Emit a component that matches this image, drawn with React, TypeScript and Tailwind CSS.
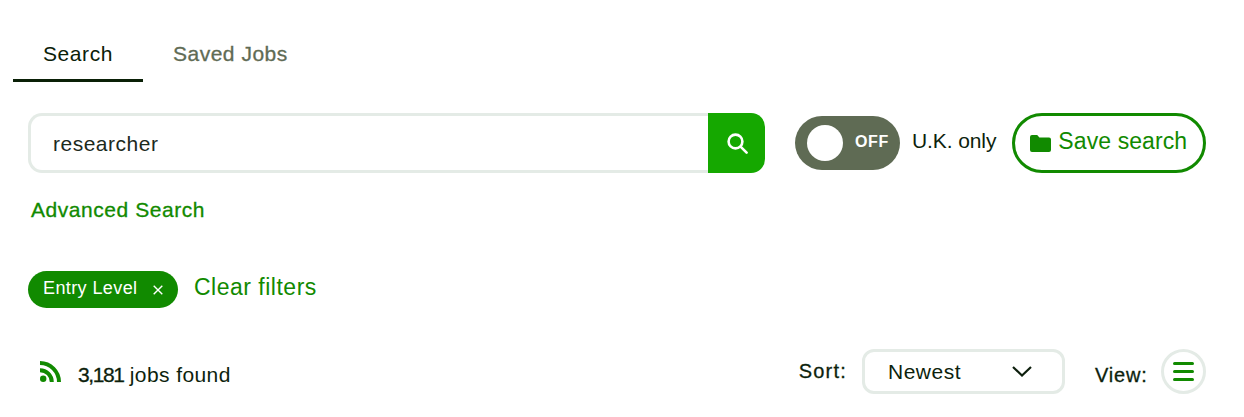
import React from 'react'

const font = "font-['Liberation_Sans',Arial,sans-serif]"

function SearchIcon() {
  return (
    <svg width="22" height="22" viewBox="0 0 22 22" fill="none" stroke="#fff" strokeWidth="2.6" strokeLinecap="round">
      <circle cx="9.5" cy="9.5" r="6.9" />
      <path d="M14.8 14.8 20.6 20.6" />
    </svg>
  )
}

function FolderIcon() {
  return (
    <svg width="21" height="17" viewBox="0 0 21 17" fill="#118a00">
      <path d="M0 2a2 2 0 0 1 2-2h5.2l2.2 2.4H19a2 2 0 0 1 2 2V15a2 2 0 0 1-2 2H2a2 2 0 0 1-2-2z" />
    </svg>
  )
}

function RssIcon() {
  return (
    <svg width="21" height="21" viewBox="0 0 21 21" fill="none" stroke="#118a00" strokeWidth="4">
      <circle cx="3.2" cy="17.8" r="3.2" fill="#118a00" stroke="none" />
      <path d="M0 9.2a11.8 11.8 0 0 1 11.8 11.8" />
      <path d="M0 2a19 19 0 0 1 19 19" />
    </svg>
  )
}

export default function App() {
  return (
    <div className={`w-[1244px] h-[417px] overflow-hidden bg-white text-[#0d1f0d] ${font}`}>
      {/* tabs */}
      <div className="flex pt-[26px] pl-[13px]">
        <div className="w-[130px] h-[56px] pt-[2px] flex items-center justify-center text-[21px] tracking-[0.6px] border-b-[3px] border-[#0a2007] text-[#0a2007]">
          Search
        </div>
        <div className="h-[56px] pb-[1px] pl-[30px] flex items-center text-[21px] tracking-[0.5px] text-[#5f6b54] [-webkit-text-stroke:0.3px_#5f6b54]">
          Saved Jobs
        </div>
      </div>

      {/* search row */}
      <div className="flex items-center mt-[31px] pl-[28px]">
        <div className="w-[680px] h-[60px] flex items-center pl-[22px] pt-[1px] border-[3px] border-r-0 border-[#e4ebe6] rounded-l-[14px] text-[21px] tracking-[0.5px] text-[#1c2a1c]">
          researcher
        </div>
        <div className="w-[57px] h-[60px] flex items-center justify-center bg-[#15a800] rounded-r-[14px]">
          <SearchIcon />
        </div>
        <div className="ml-[30px] w-[105px] h-[54px] flex items-center rounded-full bg-[#5f6b54] pl-[12px]">
          <div className="w-[36px] h-[36px] rounded-full bg-white" />
          <span className="ml-[12px] pb-[3px] text-[16px] font-bold tracking-[0.6px] text-white">OFF</span>
        </div>
        <span className="ml-[12px] pb-[5px] text-[21px] tracking-[-0.1px] text-[#0d1f0d]">U.K. only</span>
        <div className="ml-[16px] w-[194px] h-[60px] flex items-center pl-[15px] border-[3px] border-[#118a00] rounded-full">
          <FolderIcon />
          <span className="ml-[7px] pb-[3px] text-[23px] tracking-[0.1px] text-[#118a00]">Save search</span>
        </div>
      </div>

      <div className="mt-[24px] pl-[31px] text-[21px] leading-[26px] tracking-[0.55px] text-[#118a00] [-webkit-text-stroke:0.3px_#118a00]">Advanced Search</div>

      {/* filters */}
      <div className="flex items-center mt-[47px] pl-[28px]">
        <div className="w-[150px] h-[37px] flex items-center pl-[15px] pb-[3px] rounded-full bg-[#118a00] text-white text-[18px] tracking-[0.4px]">
          Entry Level
          <svg className="ml-[16px] mt-[4px]" width="10" height="10" viewBox="0 0 10 10" stroke="#fff" strokeWidth="1.4">
            <path d="M.7.7l8.6 8.6M9.3.7.7 9.3" />
          </svg>
        </div>
        <span className="ml-[16px] pb-[5px] text-[23px] tracking-[0.5px] text-[#118a00]">Clear filters</span>
      </div>

      {/* results bar */}
      <div className="flex items-center mt-[39px] pl-[40px]">
        <RssIcon />
        <span className="ml-[17px] pt-[7px] text-[21px] text-[#0d1f0d]">
          <span className="tracking-[-1.4px] [-webkit-text-stroke:0.3px_#0d1f0d]">3,181</span>
          <span className="tracking-[0.4px]"> jobs found</span>
        </span>
        <span className="ml-[568px] pb-[1px] text-[20px] tracking-[1.2px] [-webkit-text-stroke:0.3px_#0d1f0d]">Sort:</span>
        <div className="ml-[15px] w-[203px] h-[45px] flex items-center justify-between pl-[23px] pr-[30px] pt-[1px] border-[3px] border-[#e4ebe6] rounded-[12px] text-[21px] tracking-[0.5px]">
          Newest
          <svg width="20" height="11" viewBox="0 0 20 11" fill="none" stroke="#0d1f0d" strokeWidth="2.2">
            <path d="M1 1l9 8.5L19 1" />
          </svg>
        </div>
        <span className="ml-[30px] pt-[7px] text-[20px] tracking-[0.8px] [-webkit-text-stroke:0.3px_#0d1f0d]">View:</span>
        <div className="ml-[13px] w-[45px] h-[45px] flex flex-col items-center justify-center gap-[5px] rounded-full border-[3px] border-[#e4ebe6]">
          <div className="w-[21px] h-[3px] bg-[#118a00] rounded-full" />
          <div className="w-[21px] h-[3px] bg-[#118a00] rounded-full" />
          <div className="w-[21px] h-[3px] bg-[#118a00] rounded-full" />
        </div>
      </div>
    </div>
  )
}
